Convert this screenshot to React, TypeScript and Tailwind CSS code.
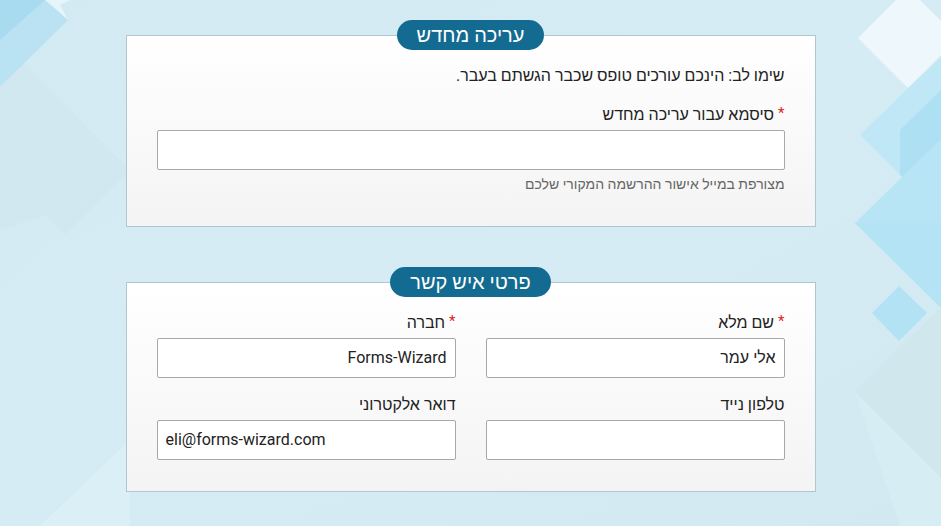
import React from "react";

const font = { fontFamily: "Roboto, 'Liberation Sans', 'Noto Sans', sans-serif" };

function Bg() {
  return (
    <svg
      className="absolute inset-0 pointer-events-none"
      width="941"
      height="526"
      viewBox="0 0 941 526"
      aria-hidden="true"
    >
      <defs>
        <linearGradient id="bgg" x1="0" y1="0" x2="1" y2="1">
          <stop offset="0" stopColor="#d3eaf3" />
          <stop offset="0.5" stopColor="#d6ecf4" />
          <stop offset="1" stopColor="#d2e9f1" />
        </linearGradient>
      </defs>
      <rect width="941" height="526" fill="url(#bgg)" />
      {/* left subtle shapes */}
      <polygon points="0,40 130,170 0,300" fill="#d0e6ee" opacity="0.5" />
      <polygon points="0,230 45,215 130,300 0,430" fill="#d8eef5" opacity="0.5" />
      <polygon points="40,526 130,440 130,526" fill="#dcf0f7" opacity="0.8" />
      {/* top-left blue diamonds */}
      <polygon points="0,87 68,20 48,0 0,0" fill="#b5e0f2" opacity="0.85" />
      <polygon points="0,40 45,0 0,0" fill="#a6d9ef" opacity="0.9" />
      <polygon points="45,0 68,20 60,5 70,0" fill="#eaf7fc" opacity="0.8" />
      {/* right side diamonds */}
      <polygon points="858,38 908,-12 958,38 908,88" fill="#eef8fc" />
      <polygon points="860,135 908,88 960,40 960,230 908,183" fill="#bfe7f5" />
      <polygon points="900,130 941,90 941,210 900,175" fill="#a9def3" opacity="0.8" />
      <polygon points="855,223 945,135 945,310" fill="#b8e5f5" />
      <polygon points="855,223 940,307 945,310 945,223" fill="#b3e3f4" />
      <polygon points="872,313 899,286 927,313 899,341" fill="#b2e2f4" />
      <polygon points="855,392 941,307 941,478" fill="#d0e7ee" />
      <polygon points="855,392 941,478 941,526 900,526" fill="#d8eef5" opacity="0.7" />
    </svg>
  );
}

function Req() {
  return <span className="text-[#e0211b] text-[15px] ml-1 relative -top-[2px]">*</span>;
}

function Legend({ children }: { children: React.ReactNode }) {
  return (
    <div className="relative z-10 flex justify-center">
      <div className="h-[30px] px-[20px] rounded-full bg-[#136b91] text-white text-[20px] leading-[30px]">
        {children}
      </div>
    </div>
  );
}

function Field({
  label,
  required,
  value,
  ltr,
}: {
  label: string;
  required?: boolean;
  value?: string;
  ltr?: boolean;
}) {
  return (
    <div className="flex flex-col">
      <div className="text-[16px] leading-[24px] text-[#222]">
        {required && <Req />}
        {label}
      </div>
      <div
        className={
          "mt-[3px] h-[40px] bg-white border border-[#a8a8a8] rounded-[2px] flex items-center px-[8px] text-[16px] text-[#222] " +
          (ltr ? "justify-end" : "")
        }
      >
        {value}
      </div>
    </div>
  );
}

export default function App() {
  return (
    <div dir="rtl" style={font} className="relative w-full h-[526px] overflow-hidden">
      <Bg />
      <div className="relative w-[690px] mx-auto pt-[20px] flex flex-col">
        <Legend>עריכה מחדש</Legend>
        <div className="-mt-[15px] border border-[#b2c6d0] bg-gradient-to-b from-white to-[#f4f4f4] px-[30px] pt-[28px] pb-[32px]">
          <div className="text-[16px] leading-[24px] text-[#222]">
            שימו לב: הינכם עורכים טופס שכבר הגשתם בעבר.
          </div>
          <div className="mt-[15px]">
            <Field label="סיסמא עבור עריכה מחדש" required />
          </div>
          <div className="mt-[4px] text-[14px] leading-[20px] text-[#666]">
            מצורפת במייל אישור ההרשמה המקורי שלכם
          </div>
        </div>

        <div className="mt-[40px]">
          <Legend>פרטי איש קשר</Legend>
        </div>
        <div className="-mt-[15px] border border-[#b2c6d0] bg-gradient-to-b from-white to-[#f4f4f4] px-[30px] pt-[28px] pb-[31px]">
          <div className="grid grid-cols-2 gap-x-[30px] gap-y-[15px]">
            <Field label="שם מלא" required value="אלי עמר" />
            <Field label="חברה" required value="Forms-Wizard" />
            <Field label="טלפון נייד" />
            <Field label="דואר אלקטרוני" value="eli@forms-wizard.com" ltr />
          </div>
        </div>
      </div>
    </div>
  );
}
